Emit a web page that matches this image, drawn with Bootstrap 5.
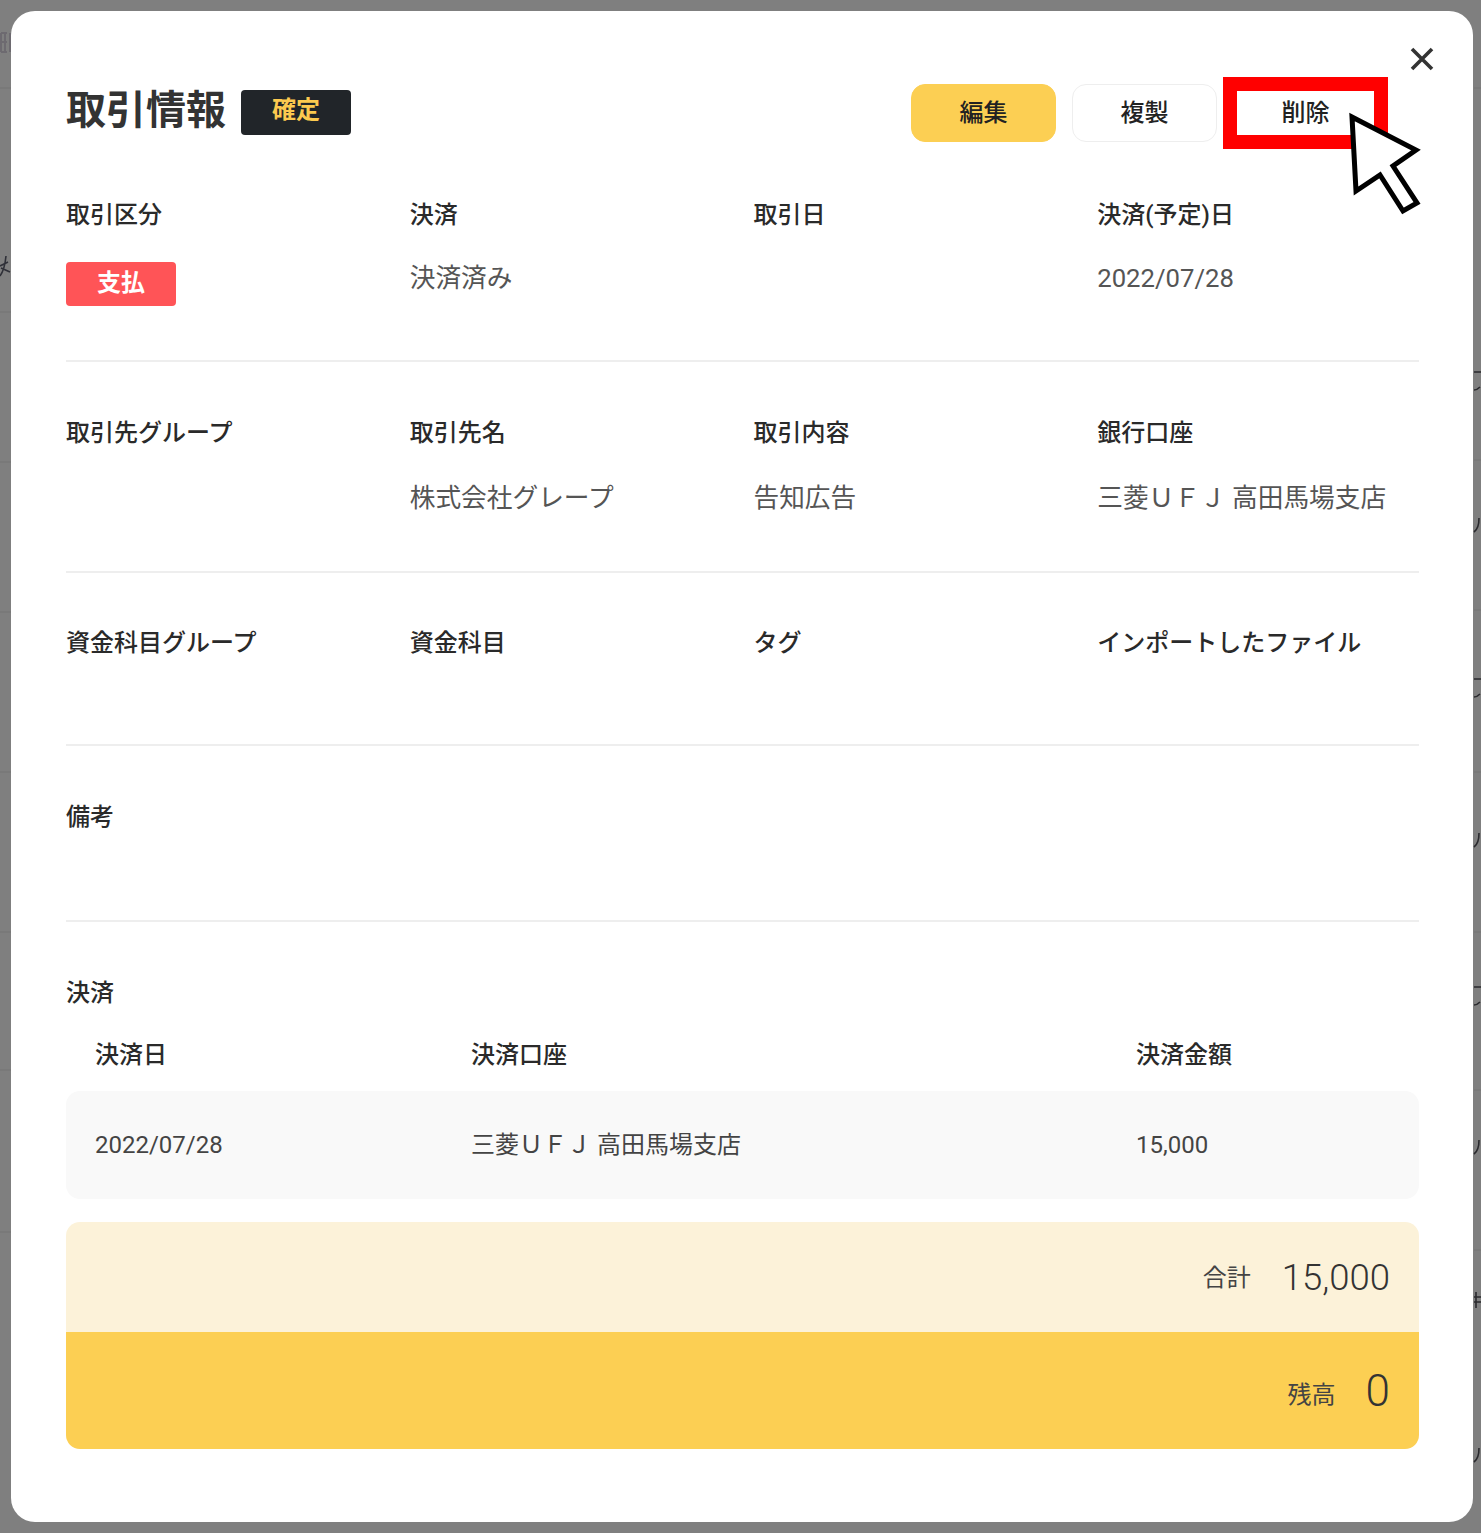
<!DOCTYPE html>
<html lang="ja"><head><meta charset="utf-8">
<link href="https://cdn.jsdelivr.net/npm/bootstrap@5.3.0/dist/css/bootstrap.min.css" rel="stylesheet">
<style>
html,body{height:100%}
body{background:#7f7f7f;font-family:Roboto,"Noto Sans CJK JP",sans-serif;color:#333;overflow:hidden;position:relative}
.backdrop-marks{position:absolute;left:0;top:0}
.sheet{position:relative;margin:11px 8px 0 11px;width:1462px;height:1511px;background:#fff;border-radius:24px;padding:0 54px 0 55px}
.closer{position:absolute;left:1399px;top:36px;background:none;border:0;padding:0;line-height:0}
.head{height:84px;padding-top:72px;box-sizing:content-box}
.head-in{height:58px}
.ttl{font-size:40px;font-weight:700;margin:0;color:#333;line-height:54px;padding-bottom:2px;width:160px;white-space:nowrap}
.st-badge{background:#212529;color:#fcc94f;font-size:24px;font-weight:700;border-radius:4px;width:110px;height:45px;margin:1px 0 0 15px;line-height:41px;text-align:center}
.act{width:145px;height:58px;border-radius:14px;font-size:24px;font-weight:500;color:#222;padding:0;line-height:54px}
.act-y{background:#fccf53;border:1px solid #fccf53}
.act-w{background:#fff;border:1px solid #eee}
.rw{--bs-gutter-x:22px}
.lbl{font-size:24px;font-weight:500;color:#2a2a2a;line-height:32px;white-space:nowrap}
.val{font-size:25.7px;color:#555;line-height:34px;white-space:nowrap}
.pay{background:#ff5457;color:#fff;font-weight:700;font-size:24px;width:110px;height:44px;border-radius:4px;line-height:42px;text-align:center;margin-top:31px}
.sec{border-bottom:2px solid #eee}
.s1{height:195px;padding-top:32px}
.s2{height:211px;padding-top:55px}
.s3{height:173px;padding-top:54px}
.s4{height:176px;padding-top:55px}
.s5{padding-top:55px}
.v1{margin-top:30px}
.v1b{margin-top:32px}
.tb-h{margin-top:9px;height:73px;padding:0 0 0 29px;align-items:center}
.tb-r{height:108px;background:#f9f9f9;border-radius:14px;padding-left:29px;align-items:center;color:#444;font-size:24px}
.c1{width:376px}.c2{width:665px}
.tot{height:110px;background:#fcf2d9;margin-top:23px;border-radius:14px 14px 0 0;padding-right:29px;padding-top:34px}
.bal{height:117px;background:#fccf53;border-radius:0 0 14px 14px;padding-right:29px;padding-top:29px}
.t-l{font-size:24px;color:#444;line-height:44px;margin-right:31px}
.t-n{font-size:36.5px;font-weight:300;color:#333;line-height:44px}
.b-n{font-size:44px;font-weight:300;color:#333;line-height:60px}
.b-l{line-height:50px;margin-right:30px;margin-top:9px}
.mark-box{position:absolute;left:1223px;top:77px;width:165px;height:72px;border:14px solid #f00}
.ptr{position:absolute;left:1330px;top:98px}
</style></head><body>
<svg class="backdrop-marks" width="1481" height="1533" viewBox="0 0 1481 1533" fill="none">
<g stroke="#787878" stroke-width="1.5"><path d="M0 88H12M0 312H12M0 462H12M0 612H12M0 772H12M0 932H12M0 1070H12M0 1232H12M1474 88H1481M1474 460H1481M1474 610H1481M1474 772H1481M1474 932H1481M1474 1090H1481M1474 1250H1481"/></g>
<g stroke="#6d6a70" stroke-width="2"><path d="M1 33V52M5 33V52M1 33H7M1 42H7M1 52H7M10 33V52"/></g>
<g stroke="#2f3038" stroke-width="1.6"><path d="M0 266 8 262M6 256C5 266 3 272 0 276M1 268 10 272"/></g>
<g stroke="#2a2a2e" stroke-width="1.6"><path d="M1474 372H1481M1474 390C1477 390 1478 389 1480 387M1474 679H1481M1474 697C1477 697 1478 696 1480 694M1474 987H1481M1474 1005C1477 1005 1478 1004 1480 1002M1479 518C1479 526 1477 530 1474 532M1479 833C1479 841 1477 845 1474 847M1479 1140C1479 1148 1477 1152 1474 1154M1479 1448C1479 1456 1477 1460 1474 1462M1476 1292V1308M1474 1297H1481M1474 1302H1481"/></g>
</svg>
<div class="sheet">
<button class="closer" aria-label="閉じる"><svg width="24" height="24" viewBox="0 0 24 24"><path d="M2 2 22 22M22 2 2 22" stroke="#333" stroke-width="3.6" fill="none"/></svg></button>
<div class="head d-flex align-items-start justify-content-between"><div class="d-flex align-items-center head-in"><h1 class="ttl">取引情報</h1><div class="st-badge">確定</div></div>
<div class="d-flex gap-3 align-items-center head-in" style="margin-top:1px"><button class="btn act act-y">編集</button><button class="btn act act-w">複製</button><button class="btn act act-w border-0">削除</button><div style="width:25px"></div></div></div>

<div class="sec s1"><div class="row rw"><div class="col-3"><div class="lbl">取引区分</div><div class="pay">支払</div></div><div class="col-3"><div class="lbl">決済</div><div class="val v1">決済済み</div></div><div class="col-3"><div class="lbl">取引日</div></div><div class="col-3"><div class="lbl">決済(予定)日</div><div class="val v1">2022/07/28</div></div></div></div>
<div class="sec s2"><div class="row rw"><div class="col-3"><div class="lbl">取引先グループ</div></div><div class="col-3"><div class="lbl">取引先名</div><div class="val v1b">株式会社グレープ</div></div><div class="col-3"><div class="lbl">取引内容</div><div class="val v1b">告知広告</div></div><div class="col-3"><div class="lbl">銀行口座</div><div class="val v1b">三菱ＵＦＪ 高田馬場支店</div></div></div></div>
<div class="sec s3"><div class="row rw"><div class="col-3"><div class="lbl">資金科目グループ</div></div><div class="col-3"><div class="lbl">資金科目</div></div><div class="col-3"><div class="lbl">タグ</div></div><div class="col-3"><div class="lbl">インポートしたファイル</div></div></div></div>
<div class="sec s4"><div class="lbl">備考</div></div>
<div class="s5"><div class="lbl">決済</div>
<div class="d-flex tb-h lbl"><div class="c1">決済日</div><div class="c2">決済口座</div><div>決済金額</div></div>
<div class="d-flex tb-r"><div class="c1">2022/07/28</div><div class="c2">三菱ＵＦＪ 高田馬場支店</div><div>15,000</div></div>
<div class="d-flex justify-content-end align-items-start tot"><span class="t-l">合計</span><span class="t-n">15,000</span></div>
<div class="d-flex justify-content-end align-items-start bal"><span class="t-l b-l">残高</span><span class="b-n">0</span></div>
</div>
</div>
<div class="mark-box"></div>
<svg class="ptr" width="100" height="125" viewBox="1330 98 100 125"><polygon points="1352,117 1416,150 1393,166 1417,203 1403,211 1380,175 1356,191" fill="#fff" stroke="#000" stroke-width="5"/></svg>
</body></html>
